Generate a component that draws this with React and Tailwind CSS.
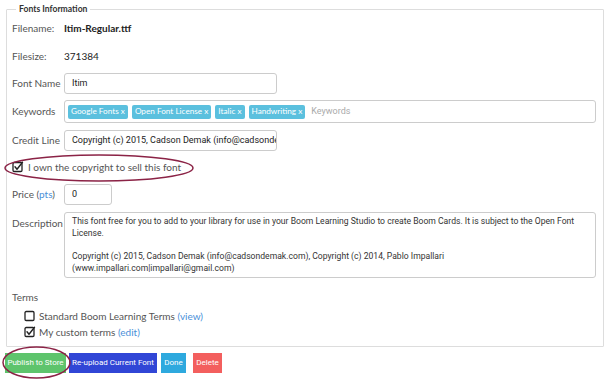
import React from "react";

const label = "font-['Lato',sans-serif] text-[10px] text-[#555] whitespace-nowrap";
const roboto = "font-['Roboto',sans-serif]";

function Check({ checked }) {
  return (
    <svg width="12" height="12" viewBox="0 0 12 12" className="shrink-0">
      <rect x="1" y="1.5" width="9" height="9" rx="1.2" fill="none" stroke="#222" strokeWidth="1.3" />
      {checked && <path d="M3 5.8 L5 8.2 L10.5 1.2" fill="none" stroke="#222" strokeWidth="1.4" strokeLinecap="round" strokeLinejoin="round" />}
    </svg>
  );
}

function Tag({ children }) {
  return (
    <span className="h-[14px] flex items-center px-[3px] rounded-[2px] bg-[#5bc0de] text-white text-[8.2px] font-['Lato',sans-serif] whitespace-nowrap">
      {children}
    </span>
  );
}

export default function App() {
  return (
    <div className="relative w-[610px] h-[380px] bg-white pt-[3px] pl-[6px] pr-[6px] overflow-hidden">
      <fieldset className="w-[598px] border border-[#ddd] pl-[5px] pr-[6px] pt-[3px] pb-[6px] rounded-[1px]">
        <legend className="ml-[4px] px-[3px] text-[8.6px] leading-[12px] font-bold text-[#333] font-['Lato',sans-serif]">
          Fonts Information
        </legend>
        <div className="flex items-center h-[20px]">
          <div className={`w-[52px] shrink-0 ${label}`}>Filename:</div>
          <div className="text-[10px] font-bold text-[#222] font-['Lato',sans-serif]">Itim-Regular.ttf</div>
        </div>
        <div className="flex items-center h-[20px] mt-[8px]">
          <div className={`w-[52px] shrink-0 ${label}`}>Filesize:</div>
          <div className="text-[10px] text-[#222] font-['Lato',sans-serif]">371384</div>
        </div>
        <div className="flex items-center h-[21px] mt-[7px]">
          <div className={`w-[52px] shrink-0 ${label}`}>Font Name</div>
          <div className={`w-[213px] h-[21px] border border-[#ccc] rounded-[3px] flex items-center px-[7px] text-[9px] text-[#222] ${roboto}`}>Itim</div>
        </div>
        <div className="flex items-center h-[23px] mt-[6px]">
          <div className={`w-[52px] shrink-0 ${label}`}>Keywords</div>
          <div className="w-[532px] h-[23px] border border-[#ccc] rounded-[3px] flex items-center pl-[3px] gap-[4px]">
            <Tag>Google Fonts x</Tag>
            <Tag>Open Font License x</Tag>
            <Tag>Italic x</Tag>
            <Tag>Handwriting x</Tag>
            <span className={`ml-[2px] text-[9px] text-[#aaa] ${roboto}`}>Keywords</span>
          </div>
        </div>
        <div className="flex items-center h-[21px] mt-[7px]">
          <div className={`w-[52px] shrink-0 ${label}`}>Credit Line</div>
          <div className={`w-[213px] h-[21px] border border-[#ccc] rounded-[3px] flex items-center pl-[7px] text-[9px] text-[#222] overflow-hidden whitespace-nowrap ${roboto}`}>
            Copyright (c) 2015, Cadson Demak (info@cadsondemak.com)
          </div>
        </div>
        <div className="flex items-center h-[18px] mt-[7px] gap-[4px]">
          <Check checked />
          <span className={`${label} text-[#333]`}>I own the copyright to sell this font</span>
        </div>
        <div className="flex items-center h-[21px] mt-[8px]">
          <div className={`w-[52px] shrink-0 ${label}`}>
            Price (<span className="text-[#4a90d9]">pts</span>)
          </div>
          <div className={`w-[48px] h-[21px] border border-[#ccc] rounded-[3px] flex items-center px-[7px] text-[9px] text-[#222] ${roboto}`}>0</div>
        </div>
        <div className="flex items-start mt-[7px]">
          <div className={`w-[52px] shrink-0 pt-[4px] ${label}`}>Description</div>
          <div className={`w-[532px] h-[66px] border border-[#ccc] rounded-[3px] pl-[7px] pt-[3px] text-[8.6px] leading-[11.8px] text-[#333] ${roboto}`}>
            <div className="whitespace-nowrap">This font free for you to add to your library for use in your Boom Learning Studio to create Boom Cards. It is subject to the Open Font</div>
            <div>License.</div>
            <div>&nbsp;</div>
            <div className="whitespace-nowrap">Copyright (c) 2015, Cadson Demak (info@cadsondemak.com), Copyright (c) 2014, Pablo Impallari</div>
            <div>(www.impallari.com|impallari@gmail.com)</div>
          </div>
        </div>
        <div className={`h-[18px] flex items-center mt-[10px] ${label}`}>Terms</div>
        <div className="flex items-center h-[16px] mt-[2px] pl-[12px] gap-[3px]">
          <Check />
          <span className={`${label} text-[#333]`}>
            Standard Boom Learning Terms <span className="text-[#4a90d9]">(view)</span>
          </span>
        </div>
        <div className="flex items-center h-[16px] pl-[12px] gap-[3px]">
          <Check checked />
          <span className={`${label} text-[#333]`}>
            My custom terms <span className="text-[#4a90d9]">(edit)</span>
          </span>
        </div>
      </fieldset>
      <div className={`flex items-center mt-[6px] -ml-[1px] text-[8px] text-white whitespace-nowrap ${roboto}`}>
        <div className="w-[61px] h-[20px] flex items-center justify-center bg-[#5ec46c]">Publish to Store</div>
        <div className="w-[88px] h-[20px] ml-[3px] flex items-center justify-center bg-[#3146d6]">Re-upload Current Font</div>
        <div className="w-[25px] h-[20px] ml-[4px] flex items-center justify-center bg-[#2ea9de]">Done</div>
        <div className="w-[29px] h-[20px] ml-[7px] flex items-center justify-center bg-[#f35f5e]">Delete</div>
      </div>
      <svg className="absolute left-0 top-0 pointer-events-none" width="610" height="380">
        <ellipse cx="99" cy="168" rx="94" ry="13" fill="none" stroke="#8b2346" strokeWidth="1.5" />
        <ellipse cx="36.5" cy="362.5" rx="33.5" ry="15.5" fill="none" stroke="#8b2346" strokeWidth="1.5" />
      </svg>
    </div>
  );
}
